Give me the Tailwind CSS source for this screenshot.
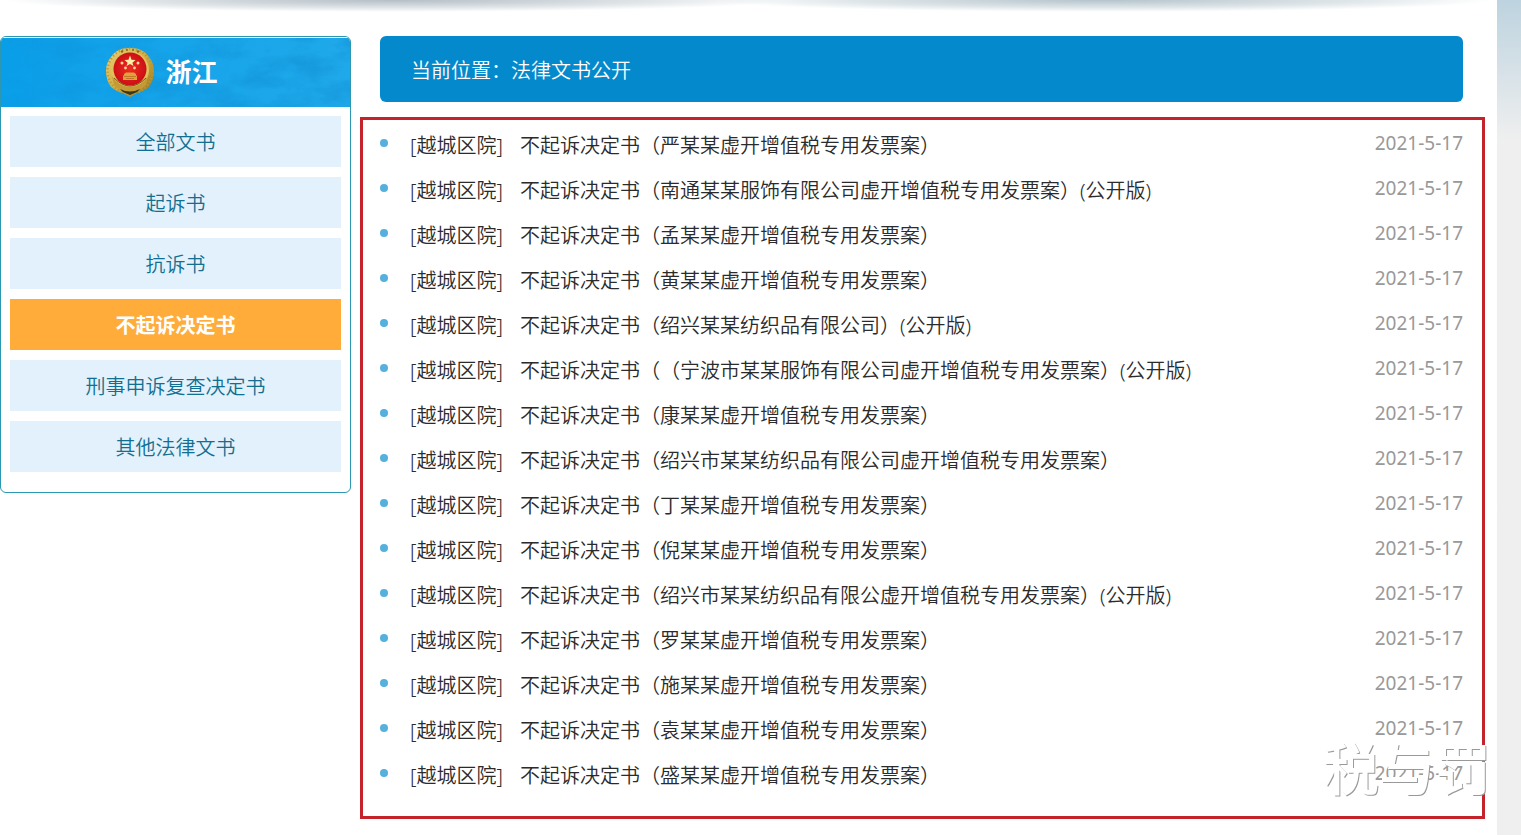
<!DOCTYPE html>
<html lang="zh-CN">
<head>
<meta charset="utf-8">
<meta name="viewport" content="width=device-width, initial-scale=1">
<title>法律文书公开</title>
<script src="https://cdn.jsdelivr.net/npm/@tailwindcss/browser@4"></script>
</head>
<body class="bg-white font-['Noto_Sans','Noto_Sans_CJK_SC',sans-serif] text-[20px] leading-[30px] font-[350] text-[#2b2b2b] [text-spacing-trim:space-all]">
<div class="flex min-h-screen overflow-hidden">
  <div class="min-w-0 flex-1">
    <!-- soft shadow under the site banner -->
    <div class="flex h-9" aria-hidden="true">
      <div class="h-3 flex-1 bg-[radial-gradient(ellipse_at_50%_0%,#b4bec6_0%,#dfe4e7_45%,#ffffff_70%)]"></div>
      <div class="-ml-20 h-3 flex-1 bg-[radial-gradient(ellipse_at_50%_0%,#b4c3cc_0%,#dfe6e9_45%,#ffffff00_70%)]"></div>
    </div>

    <div class="flex items-start gap-[9px] pr-3">
      <aside class="w-[351px] shrink-0 overflow-hidden rounded-md border border-[#2b97b0] bg-white pb-5">
        <header class="relative flex h-[70px] items-center justify-center gap-2.5 border-t border-white bg-linear-to-r from-[#0a9fe9] to-[#1fa9ea] pr-7 pb-0.5">
          <svg class="absolute inset-0 h-full w-full" viewBox="0 0 349 69" preserveAspectRatio="none" aria-hidden="true">
            <defs>
              <filter id="cloud" x="0" y="0" width="100%" height="100%" color-interpolation-filters="sRGB">
                <feTurbulence type="fractalNoise" baseFrequency=".025 .05" numOctaves="4" seed="8"/>
                <feColorMatrix values="0 0 0 0 .04  0 0 0 0 .5  0 0 0 0 .78  2.6 0 0 0 -1"/>
              </filter>
              <linearGradient id="fade"><stop offset="0" stop-color="#222"/><stop offset=".3" stop-color="#aaa"/><stop offset="1" stop-color="#fff"/></linearGradient>
              <mask id="m"><rect width="349" height="69" fill="url(#fade)"/></mask>
            </defs>
            <g mask="url(#m)"><rect width="349" height="69" filter="url(#cloud)" opacity=".35"/></g>
          </svg>
          <svg class="relative h-[50px] w-[50px]" viewBox="0 0 50 50" role="img" aria-label="检徽">
            <defs>
              <linearGradient id="gold" x1="0" y1="0" x2="1" y2="1"><stop offset="0" stop-color="#e9d27a"/><stop offset=".5" stop-color="#d2ac3e"/><stop offset="1" stop-color="#94701c"/></linearGradient>
              <radialGradient id="red"><stop offset="0" stop-color="#ee2a22"/><stop offset="1" stop-color="#cb1014"/></radialGradient>
            </defs>
            <path d="M25 1C34 1 40 4 44 10Q49 16 49 24Q49 33 44 40Q38 45 32 46L25 50L18 46Q12 45 6 40Q1 33 1 24Q1 16 6 10C10 4 16 1 25 1Z" fill="url(#gold)"/>
            <circle cx="25" cy="24" r="22.5" fill="none" stroke="#b8963a" stroke-width="2.500" stroke-dasharray="1.2 2.400"/>
            <circle cx="25" cy="23" r="19" fill="#dfc15b"/>
            <circle cx="25" cy="22" r="16.5" fill="url(#red)"/>
            <path d="M7 29Q14 40 25 40Q36 40 43 29L41 38Q34 45 25 45Q16 45 9 38Z" fill="#c39a33"/>
            <path d="M9 31Q17 39 25 39Q33 39 41 31" fill="none" stroke="#7c5519" stroke-width="1"/>
            <path d="M15 42Q25 47 35 42L32 45L25 48L18 45Z" fill="#373621"/>
            <path d="M25 8.500L26.500 12.700L30.500 13L27.400 15.700L28.500 19L25 16.900L21.500 19L22.600 15.700L19.500 13L23.500 12.700Z" fill="#fff0a8"/>
            <g fill="#ffd991"><circle cx="17" cy="16" r="1.500"/><circle cx="33" cy="16" r="1.500"/><circle cx="20.500" cy="21" r="1.400"/><circle cx="29.500" cy="21" r="1.400"/></g>
            <path d="M19 27L21 25.500H29L31 27V28.500H32V33H18V28.500H19Z" fill="#e2a23a"/>
            <path d="M19 29.500H31M21 31.500H29" stroke="#b3661e" stroke-width=".7"/>
            <g fill="#8d681d"><circle cx="17" cy="4.500" r="1.200"/><circle cx="22" cy="3" r="1"/><circle cx="28" cy="3" r="1"/><circle cx="33" cy="4.500" r="1.200"/></g>
          </svg>
          <h2 class="relative text-[26px] font-bold text-white">浙江</h2>
        </header>
        <nav class="flex flex-col gap-2.5 px-[9px] pt-[9px] text-center leading-[49px] text-[#136f90]" aria-label="文书类别">
          <a href="#" class="block bg-[#e2f1fc] pt-0.5">全部文书</a>
          <a href="#" class="block bg-[#e2f1fc] pt-0.5">起诉书</a>
          <a href="#" class="block bg-[#e2f1fc] pt-0.5">抗诉书</a>
          <a href="#" class="block bg-[#ffac3a] pt-0.5 font-bold text-white" aria-current="page">不起诉决定书</a>
          <a href="#" class="block bg-[#e2f1fc] pt-0.5">刑事申诉复查决定书</a>
          <a href="#" class="block bg-[#e2f1fc] pt-0.5">其他法律文书</a>
        </nav>
      </aside>

      <main class="relative min-w-0 flex-1">
        <div class="mr-[22px] ml-5 rounded-md bg-[#048acc] px-[31px] pt-5 pb-4 text-white">当前位置：法律文书公开</div>
        <ul id="docs" class="mt-[15px] border-3 border-[#c4232c] pt-0.5 pr-[19px] pb-[19px] pl-[17px]"></ul>
        <div class="pointer-events-none absolute -right-1.5 bottom-4 text-[56px] leading-[70px] font-medium text-white [text-shadow:1px_1px_0_#999]" aria-hidden="true">税与罚</div>
      </main>
    </div>
  </div>
  <div class="w-6 shrink-0 bg-[#efefef] bg-linear-to-b from-[#bdd3df] to-[#efefef] to-[140px]" aria-hidden="true"></div>
</div>

<template id="row">
  <li class="flex h-[45px] items-center">
    <span class="mb-1 size-2 shrink-0 rounded-full bg-[#55b0de]"></span>
    <a href="#" class="ml-[22px] flex min-w-0 flex-1 pt-0.5 whitespace-nowrap"><span class="w-[110px] shrink-0">[越城区院]</span><span data-title></span></a>
    <time class="mb-1 text-[19px] font-normal text-[#999]" datetime="2021-05-17">2021-5-17</time>
  </li>
</template>
<script>
const titles = [
  '（严某某虚开增值税专用发票案）',
  '（南通某某服饰有限公司虚开增值税专用发票案）(公开版)',
  '（孟某某虚开增值税专用发票案）',
  '（黄某某虚开增值税专用发票案）',
  '（绍兴某某纺织品有限公司）(公开版)',
  '（（宁波市某某服饰有限公司虚开增值税专用发票案）(公开版)',
  '（康某某虚开增值税专用发票案）',
  '（绍兴市某某纺织品有限公司虚开增值税专用发票案）',
  '（丁某某虚开增值税专用发票案）',
  '（倪某某虚开增值税专用发票案）',
  '（绍兴市某某纺织品有限公虚开增值税专用发票案）(公开版)',
  '（罗某某虚开增值税专用发票案）',
  '（施某某虚开增值税专用发票案）',
  '（袁某某虚开增值税专用发票案）',
  '（盛某某虚开增值税专用发票案）'
];
const list = document.getElementById('docs');
const row = document.getElementById('row');
for (const t of titles) {
  const item = row.content.cloneNode(true);
  item.querySelector('[data-title]').textContent = '不起诉决定书' + t;
  list.append(item);
}
</script>
</body>
</html>
